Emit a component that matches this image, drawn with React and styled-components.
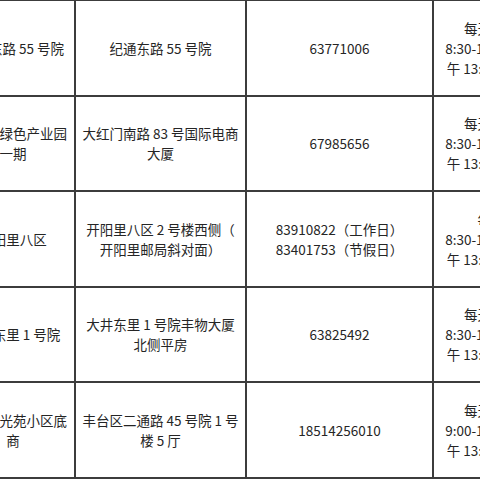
import React from "react";
import styled, { createGlobalStyle } from "styled-components";

const Global = createGlobalStyle`
  html, body { margin: 0; padding: 0; background: #fff; }
  body { width: 480px; height: 480px; overflow: hidden; }
`;

const Frame = styled.div`
  width: 480px;
  height: 480px;
  overflow: hidden;
  background: #fff;
`;

const Table = styled.table`
  border-collapse: collapse;
  table-layout: fixed;
  width: 598px;
  margin-left: -50px;
  margin-top: -1px;
  font-family: "Noto Sans CJK SC", "Noto Sans", sans-serif;
  font-size: 13.5px;
  line-height: 20px;
  color: #252525;
`;

const Col = styled.col`
  width: ${(p) => p.$w}px;
`;

const Row = styled.tr`
  height: 95.5px;
`;

const Cell = styled.td`
  border: 2px solid #3c3c3c;
  text-align: center;
  vertical-align: middle;
  padding: 0;
  white-space: nowrap;
  overflow: hidden;
`;

const rows = [
  {
    name: ["纪通东路 55 号院"],
    addr: ["纪通东路 55 号院"],
    phone: ["63771006"],
    hours: ["每天上午", "8:30-12:00，下", "午 13:00-17:00"],
  },
  {
    name: ["大红门绿色产业园", "一期"],
    addr: ["大红门南路 83 号国际电商", "大厦"],
    phone: ["67985656"],
    hours: ["每天上午", "8:30-12:00，下", "午 13:00-17:00"],
  },
  {
    name: ["开阳里八区"],
    addr: ["开阳里八区 2 号楼西侧（", "开阳里邮局斜对面）"],
    phone: ["83910822（工作日）", "83401753（节假日）"],
    hours: ["每天", "8:30-12:00，下", "午 13:30-17:30"],
  },
  {
    name: ["大井东里 1 号院"],
    addr: ["大井东里 1 号院丰物大厦", "北侧平房"],
    phone: ["63825492"],
    hours: ["每天上午", "8:30-12:00，下", "午 13:00-17:00"],
  },
  {
    name: ["丰台阳光苑小区底", "商"],
    addr: ["丰台区二通路 45 号院 1 号", "楼 5 厅"],
    phone: ["18514256010"],
    hours: ["每天上午", "9:00-12:00，下", "午 13:30-17:00"],
  },
];

const Lines = ({ items }) =>
  items.map((t, i) => (
    <React.Fragment key={i}>
      {i > 0 && <br />}
      {t}
    </React.Fragment>
  ));

export default function App() {
  return (
    <Frame>
      <Global />
      <Table>
        <colgroup>
          <Col $w={124} />
          <Col $w={171} />
          <Col $w={187} />
          <Col $w={116} />
        </colgroup>
        <tbody>
          {rows.map((r, i) => (
            <Row key={i}>
              <Cell>
                <Lines items={r.name} />
              </Cell>
              <Cell>
                <Lines items={r.addr} />
              </Cell>
              <Cell>
                <Lines items={r.phone} />
              </Cell>
              <Cell>
                <Lines items={r.hours} />
              </Cell>
            </Row>
          ))}
        </tbody>
      </Table>
    </Frame>
  );
}
